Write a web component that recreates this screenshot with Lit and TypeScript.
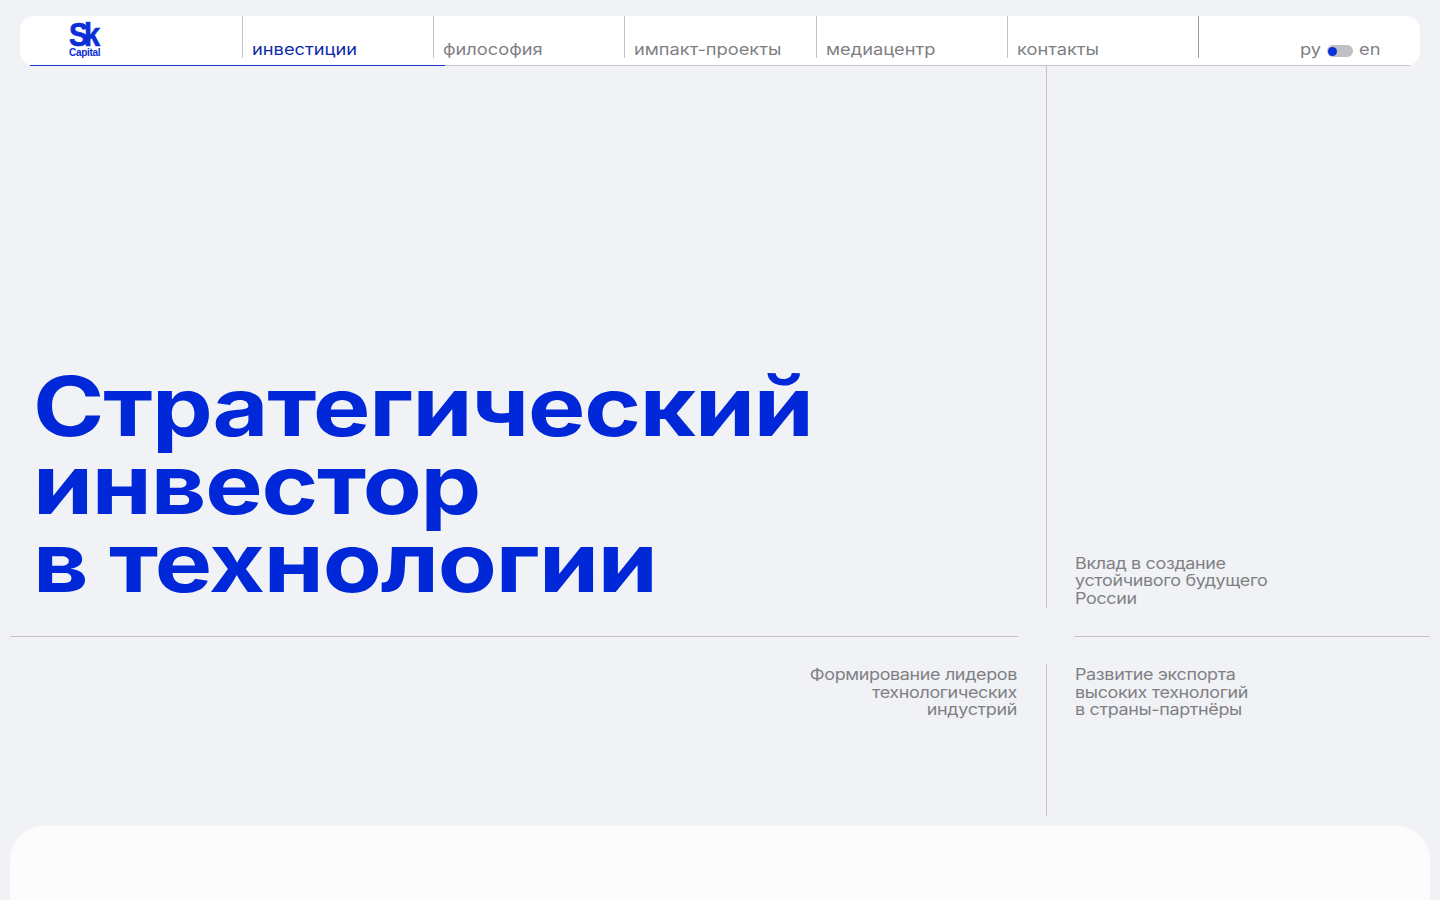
import { LitElement, html, css } from "lit";
import { customElement } from "lit/decorators.js";

@customElement("app-root")
export class AppRoot extends LitElement {
  static styles = css`
    :host { display: block; height: 900px; overflow: hidden; background: #f0f2f6; padding-top: 16px; box-sizing: border-box; font-family: Inter, "Liberation Sans", sans-serif; color: #808084; }
    .hdr { position: relative; margin: 0 20px; height: 50px; background: #fff; border-radius: 14px; display: flex; }
    .hdr::before { content: ""; position: absolute; left: 10px; right: 10px; bottom: 0; height: 1px; background: #c4c4c8; }
    .hdr::after { content: ""; position: absolute; left: 10px; width: 415px; bottom: 0; height: 1px; background: #1538c0; }
    .logo { width: 222px; box-sizing: border-box; padding: 5px 0 0 49px; color: #0a2fd6; font-family: "Liberation Sans", sans-serif; font-weight: 700; }
    .sk { font-size: 34px; line-height: 27px; letter-spacing: -5px; transform: scaleX(0.85); transform-origin: left center; -webkit-text-stroke: 0.7px #0a2fd6; }
    .cap { font-size: 10px; line-height: 10px; letter-spacing: -0.3px; }
    .cell { width: 191.2px; height: 42px; box-sizing: border-box; border-left: 1px solid #c4c4c8; padding: 23px 0 0 9px; font-size: 16px; line-height: 20px; white-space: nowrap; }
    .cell span, .lang span { display: inline-block; transform: scaleX(1.14); transform-origin: left center; }
    .cell.active { color: #0c2aa8; }
    .lang { flex: 1; height: 42px; border-left: 1px solid #9a9a9e; display: flex; justify-content: flex-end; align-items: center; gap: 6px; padding: 24px 40px 0 0; box-sizing: border-box; font-size: 16px; }
    .lang .l { height: 20px; line-height: 20px; }
    .lang .py { margin-right: 2.5px; }
    .lang .en { margin-right: 2.5px; }
    .toggle { width: 26px; height: 12px; border-radius: 6px; background: #c0c0c4; position: relative; margin-top: 4px; }
    .toggle::after { content: ""; position: absolute; left: 1.5px; top: 1.5px; width: 9px; height: 9px; border-radius: 50%; background: #0a2fd6; }
    .hero { display: grid; grid-template-columns: 1046px 1px 1fr; height: 542px; }
    .vl { background: #c4c4c8; }
    .h1 { align-self: end; margin: 0 0 6px 33px; font-size: 82px; line-height: 78px; font-weight: 650; color: #0028d8; letter-spacing: -1px; transform: scaleX(1.176); transform-origin: left center; white-space: nowrap; }
    .txt { font-size: 16px; line-height: 17.5px; letter-spacing: -0.3px; color: #808084; white-space: nowrap; }
    .txt div { transform: scaleX(1.12); }
    .right { padding-left: 28px; align-self: end; margin-bottom: 1px; }
    .right div { transform-origin: left center; }
    .left { text-align: right; padding-right: 29px; padding-top: 2px; }
    .left div { transform-origin: right center; }
    .divs { height: 56px; margin: 0 10px; display: flex; align-items: center; gap: 56px; }
    .divs i { display: block; height: 1px; background: #c4c4c8; }
    .divs i:first-child { width: 1008px; }
    .divs i:last-child { flex: 1; }
    .lower { display: grid; grid-template-columns: 1046px 1px 1fr; height: 152px; }
    .lower .right { align-self: start; padding-top: 2px; margin-bottom: 0; }
    .card { margin: 10px 10px 0; height: 200px; background: #fcfcfc; border-radius: 34px; }
  `;
  render() {
    const nav = ["инвестиции", "философия", "импакт-проекты", "медиацентр", "контакты"];
    return html`
      <header class="hdr">
        <div class="logo"><div class="sk">Sk</div><div class="cap">Capital</div></div>
        ${nav.map((n, i) => html`<div class="cell ${i === 0 ? "active" : ""}"><span>${n}</span></div>`)}
        <div class="lang"><span class="l py">ру</span><div class="toggle"></div><span class="l en">en</span></div>
      </header>
      <section class="hero">
        <div class="h1">Стратегический<br />инвестор<br />в технологии</div>
        <div class="vl"></div>
        <div class="txt right"><div>Вклад в создание</div><div>устойчивого будущего</div><div>России</div></div>
      </section>
      <div class="divs"><i></i><i></i></div>
      <section class="lower">
        <div class="txt left"><div>Формирование лидеров</div><div>технологических</div><div>индустрий</div></div>
        <div class="vl"></div>
        <div class="txt right"><div>Развитие экспорта</div><div>высоких технологий</div><div>в страны-партнёры</div></div>
      </section>
      <div class="card"></div>
    `;
  }
}
